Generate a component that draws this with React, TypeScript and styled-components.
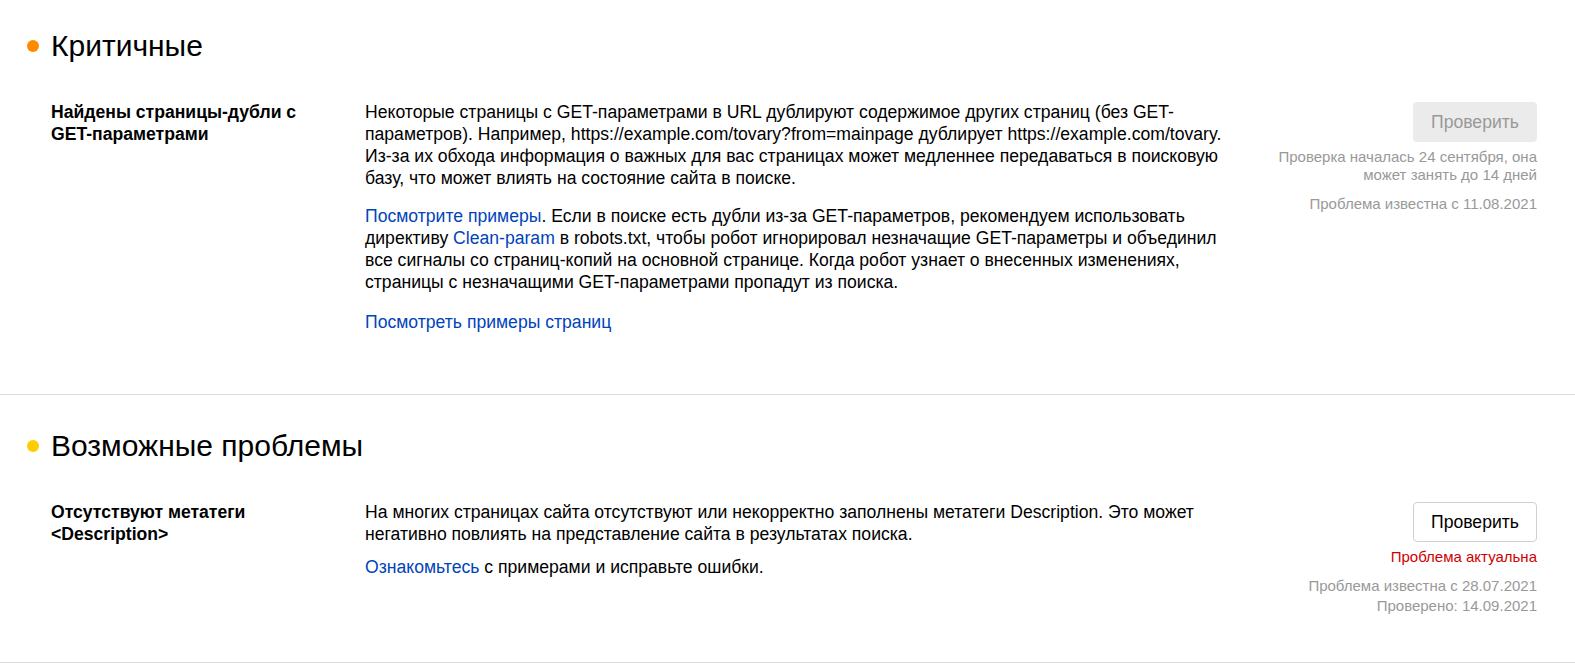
import { FC } from 'react';
import styled, { createGlobalStyle } from 'styled-components';

const GlobalStyle = createGlobalStyle`
  body {
    margin: 0;
    background: #fff;
    font-family: "Liberation Sans", Arial, sans-serif;
    color: #000;
  }
`;

type Level = 'critical' | 'possible';

const dotColors: Record<Level, string> = {
  critical: '#ff8a00',
  possible: '#ffcc00',
};

const App: FC = () => {
  return (
    <>
      <GlobalStyle />
      <Section $top={28} $bottom={61}>
        <Heading>
          <Dot $level="critical" />
          Критичные
        </Heading>
        <Row>
          <Title>
            Найдены страницы-дубли с<br />
            GET-параметрами
          </Title>
          <Content>
            <Para>
              Некоторые страницы с GET-параметрами в URL дублируют содержимое других страниц (без GET-
              <br />
              параметров). Например, https://example.com/tovary?from=mainpage дублирует https://example.com/tovary.
              <br />
              Из-за их обхода информация о важных для вас страницах может медленнее передаваться в поисковую
              <br />
              базу, что может влиять на состояние сайта в поиске.
            </Para>
            <Para>
              <Link href="#">Посмотрите примеры</Link>. Если в поиске есть дубли из-за GET-параметров, рекомендуем
              использовать
              <br />
              директиву <Link href="#">Clean-param</Link> в robots.txt, чтобы робот игнорировал незначащие
              GET-параметры и объединил
              <br />
              все сигналы со страниц-копий на основной странице. Когда робот узнает о внесенных изменениях,
              <br />
              страницы с незначащими GET-параметрами пропадут из поиска.
            </Para>
            <Para $gap={2}>
              <Link href="#">Посмотреть примеры страниц</Link>
            </Para>
          </Content>
          <Side>
            <CheckButton disabled>Проверить</CheckButton>
            <Note $gap={6}>
              Проверка началась 24 сентября, она
              <br />
              может занять до 14 дней
            </Note>
            <Note $gap={11}>Проблема известна с 11.08.2021</Note>
          </Side>
        </Row>
      </Section>
      <Section $top={33} $bottom={46}>
        <Heading>
          <Dot $level="possible" />
          Возможные проблемы
        </Heading>
        <Row>
          <Title>
            Отсутствуют метатеги
            <br />
            &lt;Description&gt;
          </Title>
          <Content $gap={11}>
            <Para>
              На многих страницах сайта отсутствуют или некорректно заполнены метатеги Description. Это может
              <br />
              негативно повлиять на представление сайта в результатах поиска.
            </Para>
            <Para>
              <Link href="#">Ознакомьтесь</Link> с примерами и исправьте ошибки.
            </Para>
          </Content>
          <Side>
            <CheckButton>Проверить</CheckButton>
            <Note $gap={6} $alert>
              Проблема актуальна
            </Note>
            <Note $gap={10} $lh={20}>
              Проблема известна с 28.07.2021
              <br />
              Проверено: 14.09.2021
            </Note>
          </Side>
        </Row>
      </Section>
    </>
  );
};

const Section = styled.section<{ $top: number; $bottom: number }>`
  padding: ${(p) => p.$top}px 38px ${(p) => p.$bottom}px 27px;
  border-bottom: 1px solid #dcdcdc;
`;

const Heading = styled.h2`
  display: flex;
  align-items: center;
  gap: 12px;
  margin: 0 0 37px;
  font-size: 30px;
  line-height: 36px;
  font-weight: 400;
`;

const Dot = styled.span<{ $level: Level }>`
  width: 12px;
  height: 12px;
  border-radius: 50%;
  background: ${(p) => dotColors[p.$level]};
  flex-shrink: 0;
`;

const Row = styled.div`
  display: grid;
  grid-template-columns: 314px 890px 1fr;
  padding-left: 24px;
  font-size: 17.6px;
  line-height: 22px;
`;

const Title = styled.div`
  font-weight: 700;
  padding-right: 20px;
`;

const Content = styled.div<{ $gap?: number }>`
  display: flex;
  flex-direction: column;
  gap: ${(p) => p.$gap ?? 16}px;
`;

const Para = styled.p<{ $gap?: number }>`
  margin: ${(p) => p.$gap ?? 0}px 0 0;
`;

const Link = styled.a`
  color: #0044bb;
  text-decoration: none;
`;

const Side = styled.div`
  display: flex;
  flex-direction: column;
  align-items: flex-end;
  text-align: right;
  padding-top: 1px;
`;

const CheckButton = styled.button`
  width: 124px;
  height: 40px;
  padding: 0;
  border-radius: 4px;
  font-family: inherit;
  font-size: 17.6px;
  color: #000;
  background: #fff;
  border: 1px solid #d0d0d0;
  cursor: pointer;

  &:disabled {
    background: #ebebeb;
    border-color: #ebebeb;
    color: #999;
    cursor: default;
  }
`;

const Note = styled.div<{ $gap: number; $alert?: boolean; $lh?: number }>`
  margin-top: ${(p) => p.$gap}px;
  font-size: 15px;
  line-height: ${(p) => p.$lh ?? 18}px;
  color: ${(p) => (p.$alert ? '#d10000' : '#999')};
`;

export default App;
